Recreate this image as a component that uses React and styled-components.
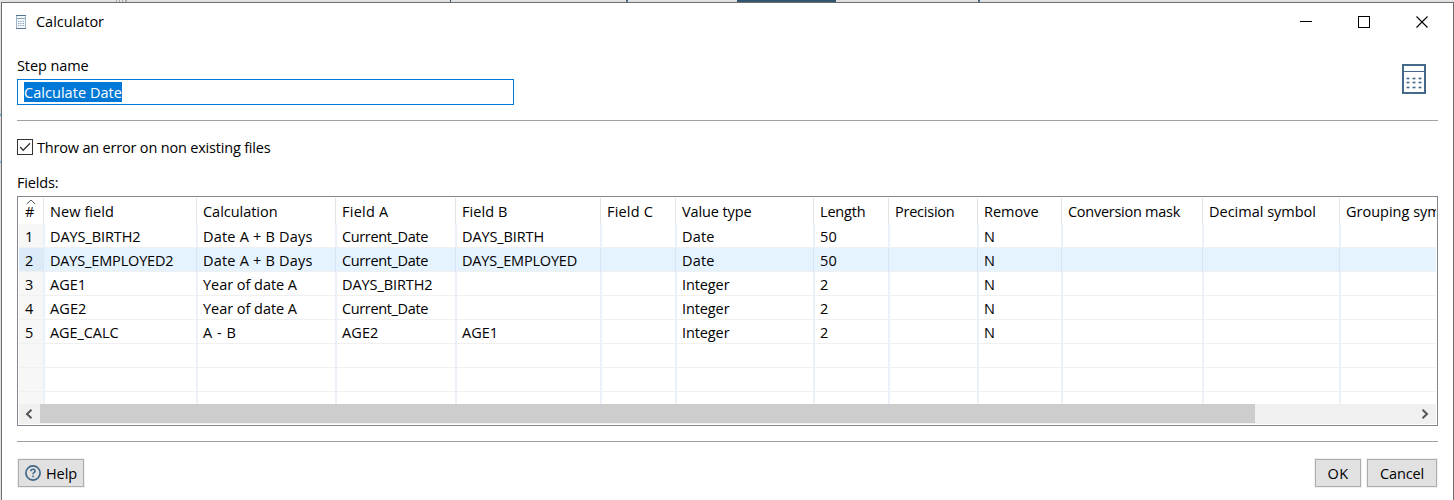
import React, { useLayoutEffect, useRef } from "react";
import styled, { createGlobalStyle } from "styled-components";

const Global = createGlobalStyle`
  * { box-sizing: border-box; }
  body { margin: 0; background: #e1e1e1; overflow: hidden;
    font-family: "Open Sans", "Noto Sans", sans-serif; font-size: 14.5px; color: #000; }
`;

const Desktop = styled.div`
  display: flex; flex-direction: column; width: 1454px; height: 500px; overflow: hidden;
`;
const TopStrip = styled.div`
  flex: none; display: flex; height: 2px; background: #e1e1e1;
`;
const Segment = styled.span`
  flex: none; width: ${p => p.$w}px; background: ${p => p.$c || "transparent"};
`;
const Middle = styled.div`display: flex; flex: 1; min-height: 0;`;
const Behind = styled.div`
  flex: none; width: 1px; overflow: hidden; padding-top: 100px; line-height: 20px;
`;
const BehindText = styled.div`height: 50px; display: flex; justify-content: flex-end;`;
const Window = styled.main`
  flex: 1; min-width: 0; display: flex; flex-direction: column;
  background: #fff; border: solid #6e6e6e; border-width: 1px 1px 0 1px;
`;
const TitleBar = styled.header`
  flex: none; height: 37px; display: flex; align-items: center; padding: 0 25px 0 14px; gap: 10px;
`;
const Controls = styled.div`display: flex; align-items: center; gap: 46px; margin-left: auto;`;
const ControlIcon = styled.svg`flex: none; width: 12px; height: 12px; overflow: visible;`;
const Body = styled.section`
  flex: 1; display: flex; flex-direction: column; padding: 0 15px;
`;
const TextSpan = styled.span`
  display: inline-block; white-space: pre; line-height: 20px; flex: none; align-self: ${p => p.$self || "auto"};
`;
const StepRow = styled.div`
  display: flex; justify-content: space-between; height: 80px; padding-top: 16px;
`;
const StepField = styled.div`display: flex; flex-direction: column;`;
const Input = styled.div`
  width: 497px; height: 26px; margin-top: 3px; padding: 2px 6px; border: 1px solid #0078d7; display: flex;
`;
const Selection = styled.div`
  height: 20px; width: 98px; padding-top: 1px; background: #0078d7; color: #fff; display: flex;
`;
const StepIcon = styled.div`padding: 8px 12px 0 0; line-height: 0;`;
const Rule = styled.div`flex: none; height: 1px; margin-top: ${p => p.$gap || 0}px; background: #a0a0a0;`;
const CheckRow = styled.label`
  display: flex; align-items: flex-start; height: 16px; margin-top: 18px; gap: 4px;
`;
const CheckBox = styled.span`
  width: 16px; height: 16px; border: 1px solid #333; display: flex;
`;
const CheckText = styled.span`display: flex; margin-top: -1px;`;
const FieldsLabel = styled.div`height: 41px; padding-top: 18px; display: flex;`;
const Table = styled.div`
  flex: none; height: 230px; border: 1px solid #828790; padding: 1px; display: flex; flex-direction: column; overflow: hidden;
`;
const HeaderRow = styled.div`display: flex; height: 26px; flex: none; overflow: hidden;`;
const HeaderCell = styled.div`
  flex: none; width: ${p => p.$w}px; overflow: hidden; position: relative;
  padding: 4px 0 0 6px; display: flex;
  border-left: ${p => (p.$first ? 0 : 1)}px solid #e2e2e2;
`;
const SortMark = styled.svg`position: absolute; left: 7px; top: 1px;`;
const Rows = styled.div`height: 180px; overflow: hidden; flex: none;`;
const Row = styled.div`
  display: flex; height: 24px; background: ${p => (p.$sel ? "#e5f3ff" : "#fff")};
`;
const Cell = styled.div`
  flex: none; width: ${p => p.$w}px; height: 24px; display: flex; padding: 3px 0 0 ${p => (p.$first || p.$sel ? 6 : 5)}px;
  background: ${p => (p.$first ? (p.$sel ? "#dcebf7" : "#f7f7f7") : "transparent")};
  border-left: ${p => (p.$first ? 0 : p.$sel ? 1 : 2)}px solid ${p => (p.$sel ? "#d3e7f9" : "#ecf1f9")};
  box-shadow: inset 0 -1px #f0f0f0;
`;
const ScrollBar = styled.div`
  height: 20px; background: #f0f0f0; display: flex; flex: none;
`;
const ScrollArrow = styled.div`
  width: 21px; height: 19px; display: flex; align-items: center; justify-content: center;
  margin-left: ${p => (p.$end ? "auto" : 0)}; padding-right: 2px;
`;
const Thumb = styled.div`width: 1215px; height: 19px; background: #cdcdcd;`;
const Footer = styled.footer`display: flex; padding: 16px 0 0; gap: 4px;`;
const Button = styled.button`
  width: ${p => p.$w}px; height: 28px; padding: 0; font: inherit; color: #000;
  background: #e1e1e1; border: 1px solid #adadad; outline: 1px solid #f0f0f0;
  margin: 1px 1px 1px ${p => (p.$push ? "auto" : "1px")};
  display: flex; align-items: center; justify-content: center; gap: 5px;
`;
const ButtonLabel = styled.span`display: flex; padding-top: 1px;`;

/* Spreads the letters so that the text takes the given width. */
function Text({ children, w, self }) {
  const ref = useRef(null);
  useLayoutEffect(() => {
    const el = ref.current;
    if (!w) return;
    el.style.letterSpacing = "0px";
    const natural = el.getBoundingClientRect().width;
    el.style.letterSpacing = `${(w - natural) / children.length}px`;
  }, [w, children]);
  return <TextSpan ref={ref} $self={self}>{children}</TextSpan>;
}

const columns = [
  ["#", 24, 11], ["New field", 153, 64], ["Calculation", 139, 74.5], ["Field A", 120, 46.5],
  ["Field B", 145, 45.5], ["Field C", 75, 46], ["Value type", 138, 69.5], ["Length", 75, 45.5],
  ["Precision", 89, 59.5], ["Remove", 84, 54.5], ["Conversion mask", 141, 112],
  ["Decimal symbol", 137, 107], ["Grouping symbol", 98, 116],
];

const widths = {
  DAYS_BIRTH2: 90.5, DAYS_EMPLOYED2: 123.5, AGE1: 36, AGE2: 36.5, AGE_CALC: 68.5,
  "Date A + B Days": 109.5, "Year of date A": 94, "A - B": 33.5, Current_Date: 86,
  DAYS_BIRTH: 82, DAYS_EMPLOYED: 115, Date: 32.5, Integer: 47.5, N: 12, 50: 17,
  1: 8, 2: 8, 3: 8, 4: 8, 5: 8,
};

const rows = [
  ["1", "DAYS_BIRTH2", "Date A + B Days", "Current_Date", "DAYS_BIRTH", "", "Date", "50", "", "N"],
  ["2", "DAYS_EMPLOYED2", "Date A + B Days", "Current_Date", "DAYS_EMPLOYED", "", "Date", "50", "", "N"],
  ["3", "AGE1", "Year of date A", "DAYS_BIRTH2", "", "", "Integer", "2", "", "N"],
  ["4", "AGE2", "Year of date A", "Current_Date", "", "", "Integer", "2", "", "N"],
  ["5", "AGE_CALC", "A - B", "AGE2", "AGE1", "", "Integer", "2", "", "N"],
  [], [], [],
];

const SmallCalculator = () => (
  <svg width="10" height="14" viewBox="0 0 10 14">
    <rect x=".5" y=".5" width="9" height="13" fill="#f4f8fa" stroke="#9db4c4" />
    <path d="M0 .5h10M0 13.5h10" stroke="#54748f" />
    <path d="M1 3.5h8" stroke="#8ba5b8" />
    <path d="M2 6.5h6M2 8.5h6M2 10.5h6" stroke="#7d9bb3" strokeDasharray="1.2 1.2" />
  </svg>
);

const Calculator = () => (
  <svg width="24" height="30" viewBox="0 0 24 30">
    <rect x="1" y="1" width="22" height="28" fill="#fff" stroke="#44698a" strokeWidth="2" />
    <path d="M2 7.5h20" stroke="#44698a" />
    <path d="M4 14.5h16M4 18.5h16M4 23.500h16" stroke="#a9bccb" strokeWidth="1.4" strokeDasharray="4 2" />
    <path d="M5 14.5h15M5 18.5h15M5 23.500h15" stroke="#44698a" strokeWidth="1.4" strokeDasharray="2 4" />
  </svg>
);

export default function App() {
  return (
    <Desktop>
      <Global />
      <TopStrip>
        <Segment $w={116} /><Segment $w={1} $c="#aaa" /><Segment $w={2} /><Segment $w={1} $c="#aaa" />
        <Segment $w={2} /><Segment $w={1} $c="#aaa" /><Segment $w={2} /><Segment $w={2} $c="#aaa" />
        <Segment $w={306} />
        <Segment $w={17} /><Segment $w={1} $c="#2f546f" /><Segment $w={175} /><Segment $w={2} $c="#4d6c84" />
        <Segment $w={109} /><Segment $w={99} $c="#31556f" /><Segment $w={142} /><Segment $w={2} $c="#4d6c84" />
      </TopStrip>
      <Middle>
        <Behind><BehindText>s</BehindText><BehindText>e</BehindText></Behind>
        <Window>
          <TitleBar>
            <SmallCalculator />
            <Text w={68}>Calculator</Text>
            <Controls>
              <ControlIcon><path d="M0 5.5h12" stroke="#000" /></ControlIcon>
              <ControlIcon><rect x=".5" y=".5" width="11" height="11" fill="none" stroke="#000" /></ControlIcon>
              <ControlIcon><path d="M.5 .5l11 11M11.5 .5L.5 11.5" stroke="#000" strokeWidth="1.1" /></ControlIcon>
            </Controls>
          </TitleBar>
          <Body>
            <StepRow>
              <StepField>
                <Text w={71.5} self="flex-start">Step name</Text>
                <Input><Selection><Text w={98}>Calculate Date</Text></Selection></Input>
              </StepField>
              <StepIcon><Calculator /></StepIcon>
            </StepRow>
            <Rule />
            <CheckRow>
              <CheckBox>
                <svg width="14" height="14"><path d="M2.200 7l3 3.200L12 3.300" fill="none" stroke="#333" strokeWidth="1.3" /></svg>
              </CheckBox>
              <CheckText><Text w={233.5}>Throw an error on non existing files</Text></CheckText>
            </CheckRow>
            <FieldsLabel><Text w={41.5}>Fields:</Text></FieldsLabel>
            <Table>
              <HeaderRow>
                {columns.map(([name, w, tw], i) => (
                  <HeaderCell key={name} $w={w} $first={i === 0}>
                    {i === 0 && (
                      <SortMark width="10" height="6"><path d="M.8 5L5 1l4.200 4" fill="none" stroke="#555" /></SortMark>
                    )}
                    <Text w={tw}>{name}</Text>
                  </HeaderCell>
                ))}
              </HeaderRow>
              <Rows>
                {rows.map((r, ri) => (
                  <Row key={ri} $sel={ri === 1}>
                    {columns.map(([name, w], i) => (
                      <Cell key={name} $w={w} $first={i === 0} $sel={ri === 1}>
                        {r[i] ? <Text w={widths[r[i]]}>{r[i]}</Text> : null}
                      </Cell>
                    ))}
                  </Row>
                ))}
              </Rows>
              <ScrollBar>
                <ScrollArrow>
                  <svg width="8" height="10"><path d="M6.500 .8L2 5l4.500 4.200" fill="none" stroke="#555" strokeWidth="2" /></svg>
                </ScrollArrow>
                <Thumb />
                <ScrollArrow $end>
                  <svg width="8" height="10"><path d="M1.500 .8L6 5L1.500 9.200" fill="none" stroke="#555" strokeWidth="2" /></svg>
                </ScrollArrow>
              </ScrollBar>
            </Table>
            <Rule $gap={15} />
            <Footer>
              <Button $w={66}>
                <svg width="16" height="16" viewBox="0 0 16 16" fill="none" stroke="#3f6686">
                  <circle cx="8" cy="8" r="7.100" strokeWidth="1.7" />
                  <path d="M5.800 6.300c0-3 4.500-2.700 4.300-.2C10 7.500 8 7.300 8 9.300M8 10.600v1.600" strokeWidth="1.5" />
                </svg>
                <ButtonLabel><Text w={31}>Help</Text></ButtonLabel>
              </Button>
              <Button $w={46} $push><ButtonLabel><Text w={21}>OK</Text></ButtonLabel></Button>
              <Button $w={70}><ButtonLabel><Text w={44}>Cancel</Text></ButtonLabel></Button>
            </Footer>
          </Body>
        </Window>
      </Middle>
    </Desktop>
  );
}
